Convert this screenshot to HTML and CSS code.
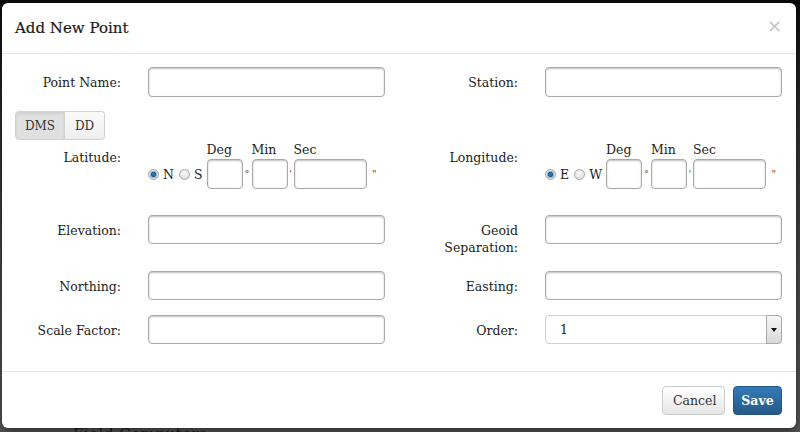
FILE: index.html
```html
<!DOCTYPE html>
<html>
<head>
<meta charset="utf-8">
<title>Add New Point</title>
<link rel="stylesheet" href="styles.css">
</head>
<body>
<div class="page">
  <h2 class="page-heading">Field Computers</h2>
</div>
<div class="modal">
  <div class="modal-header">
    <h4 class="modal-title">Add New Point</h4>
    <button class="close" type="button">×</button>
  </div>
  <div class="modal-body">
    <div class="form-grid">
      <label class="lbl">Point Name:</label>
      <input class="field" type="text">
      <label class="lbl">Station:</label>
      <input class="field" type="text">
    </div>

    <div class="btn-group">
      <button class="seg active" type="button">DMS</button>
      <button class="seg" type="button">DD</button>
    </div>

    <div class="form-grid coords">
      <label class="lbl">Latitude:</label>
      <div class="dms">
        <div class="hemis">
          <span class="radio checked"></span><span class="hem-letter">N</span>
          <span class="radio"></span><span class="hem-letter">S</span>
        </div>
        <div class="part"><span class="cap">Deg</span><input class="field short" type="text"></div>
        <span class="unit deg">°</span>
        <div class="part"><span class="cap">Min</span><input class="field short" type="text"></div>
        <span class="unit min">'</span>
        <div class="part"><span class="cap">Sec</span><input class="field long" type="text"></div>
        <span class="unit sec">"</span>
      </div>
      <label class="lbl">Longitude:</label>
      <div class="dms">
        <div class="hemis">
          <span class="radio checked"></span><span class="hem-letter">E</span>
          <span class="radio"></span><span class="hem-letter">W</span>
        </div>
        <div class="part"><span class="cap">Deg</span><input class="field short" type="text"></div>
        <span class="unit deg">°</span>
        <div class="part"><span class="cap">Min</span><input class="field short" type="text"></div>
        <span class="unit min">'</span>
        <div class="part"><span class="cap">Sec</span><input class="field long" type="text"></div>
        <span class="unit sec">"</span>
      </div>
    </div>

    <div class="form-grid lower">
      <label class="lbl">Elevation:</label>
      <input class="field" type="text">
      <label class="lbl">Geoid<br>Separation:</label>
      <input class="field" type="text">

      <label class="lbl">Northing:</label>
      <input class="field" type="text">
      <label class="lbl">Easting:</label>
      <input class="field" type="text">

      <label class="lbl">Scale Factor:</label>
      <input class="field" type="text">
      <label class="lbl">Order:</label>
      <div class="select">
        <span class="select-value">1</span>
        <span class="select-arrow"></span>
      </div>
    </div>
  </div>
  <div class="modal-footer">
    <button class="btn btn-default" type="button">Cancel</button>
    <button class="btn btn-primary" type="button">Save</button>
  </div>
</div>
</body>
</html>
```

FILE: styles.css
```css
* {
  box-sizing: border-box;
}

html, body {
  margin: 0;
  padding: 0;
}

body {
  width: 800px;
  height: 432px;
  overflow: hidden;
  position: relative;
  font-family: "DejaVu Serif", "Liberation Serif", serif;
  color: #222;
  background: linear-gradient(#0a0a0a 0%, #2a2a2a 25%, #454545 60%, #565656 100%);
}

.page {
  height: 432px;
}

.page-heading {
  margin: 0;
  padding: 426px 0 0 73px;
  font-size: 15px;
  font-weight: normal;
  color: #1c1c1c;
  line-height: 16px;
  letter-spacing: 0.5px;
}

.modal {
  position: absolute;
  top: 3px;
  left: 2px;
  width: 794px;
  height: 425px;
  background: #fff;
  border-radius: 6px;
  box-shadow: 0 3px 9px rgba(0, 0, 0, 0.5);
  display: flex;
  flex-direction: column;
}

.modal-header {
  height: 51px;
  padding: 0 14px 0 13px;
  border-bottom: 1px solid #e5e5e5;
  display: flex;
  align-items: center;
  justify-content: space-between;
}

.modal-title {
  margin: 0;
  font-size: 15px;
  font-weight: normal;
  color: #1a1a1a;
  line-height: 20px;
  -webkit-text-stroke: 0.2px #1a1a1a;
}

.close {
  border: 0;
  background: none;
  padding: 0;
  margin-top: -4px;
  font-family: "DejaVu Sans", sans-serif;
  font-size: 18px;
  line-height: 18px;
  color: #c4c4c4;
}

.modal-body {
  flex: 1;
  padding: 13px 0 0 15px;
}

.form-grid {
  display: grid;
  grid-template-columns: 104px 237px 106px 237px;
  column-gap: 27px;
  align-items: start;
}

.lbl {
  text-align: right;
  font-size: 12.5px;
  line-height: 17px;
  padding-top: 7px;
  color: #222;
}

.field {
  height: 30px;
  border: 1px solid #a9a9a9;
  border-radius: 4px;
  box-shadow: inset 0 1px 2px rgba(0, 0, 0, 0.25);
  background: #fff;
  margin: 0;
  padding: 0 8px;
  font: inherit;
}

.btn-group {
  display: flex;
  margin: 14px 0 0 -2px;
  width: 90px;
}

.seg {
  height: 29px;
  border: 1px solid #d2d2d2;
  background: linear-gradient(#fbfbfb, #eeeeee);
  font-family: inherit;
  font-size: 12px;
  color: #333;
  padding: 0;
}

.seg:first-child {
  width: 50px;
  border-radius: 4px 0 0 4px;
}

.seg:last-child {
  width: 40px;
  border-left: 0;
  border-radius: 0 4px 4px 0;
}

.seg.active {
  background: #e0e0e0;
  box-shadow: inset 0 2px 3px rgba(0, 0, 0, 0.08);
}

.coords {
  margin-top: 1px;
}

.coords .lbl {
  padding-top: 8px;
}

.dms {
  display: flex;
  align-items: flex-end;
  width: 260px;
}

.hemis {
  display: flex;
  align-items: center;
  height: 30px;
  font-size: 12.5px;
  margin-right: 4px;
}

.radio {
  width: 11px;
  height: 11px;
  border-radius: 50%;
  border: 1px solid #a8a8a8;
  background: radial-gradient(circle at 50% 35%, #fafafa, #d6d6d6);
}

.radio.checked {
  background: radial-gradient(circle, #2f7fc4 0, #1f5f99 2.5px, #9fb3c4 3px, #dedede 4px, #cfcfcf 100%);
}

.hem-letter {
  margin: 0 5px 0 4px;
}

.hem-letter:last-child {
  margin-right: 0;
}

.part {
  display: flex;
  flex-direction: column;
}

.cap {
  font-size: 12.5px;
  line-height: 17px;
  height: 18px;
}

.field.short {
  width: 36px;
  padding: 0 4px;
}

.field.long {
  width: 73px;
  padding: 0 4px;
}

.unit {
  text-align: center;
  font-size: 10px;
  line-height: 10px;
  margin-bottom: 10px;
  color: #5a5230;
}

.unit.deg {
  width: 9px;
}

.unit.min {
  width: 6px;
}

.unit.sec {
  width: 10px;
  text-align: right;
  color: #8b1f1f;
}

.lower {
  margin-top: 26px;
  row-gap: 15px;
}

.lower .field {
  height: 29px;
}

.select {
  height: 29px;
  border: 1px solid #cfcfcf;
  border-radius: 4px;
  display: flex;
  align-items: center;
  justify-content: space-between;
  padding-left: 14px;
  font-size: 12.5px;
  background: #fff;
}

.select-arrow {
  width: 16px;
  height: 29px;
  margin-right: -1px;
  border: 1px solid #a9a9a9;
  border-radius: 0 4px 4px 0;
  background: linear-gradient(#f7f7f7, #d9d9d9);
  position: relative;
}

.select-arrow::after {
  content: "";
  position: absolute;
  left: 4px;
  top: 12px;
  border-left: 3px solid transparent;
  border-right: 3px solid transparent;
  border-top: 4px solid #111;
}

.modal-footer {
  border-top: 1px solid #e5e5e5;
  padding: 14px 14px 13px;
  display: flex;
  justify-content: flex-end;
  gap: 8px;
}

.btn {
  height: 29px;
  border-radius: 4px;
  font-family: inherit;
  font-size: 12.5px;
  padding: 0 10px;
}

.btn-default {
  width: 63px;
  border: 1px solid #cccccc;
  background: linear-gradient(#ffffff, #e6e6e6);
  color: #333;
}

.btn-primary {
  width: 49px;
  border: 1px solid #245580;
  background: linear-gradient(#337ab7, #265a88);
  color: #fff;
  font-weight: bold;
  padding: 0;
}
```
